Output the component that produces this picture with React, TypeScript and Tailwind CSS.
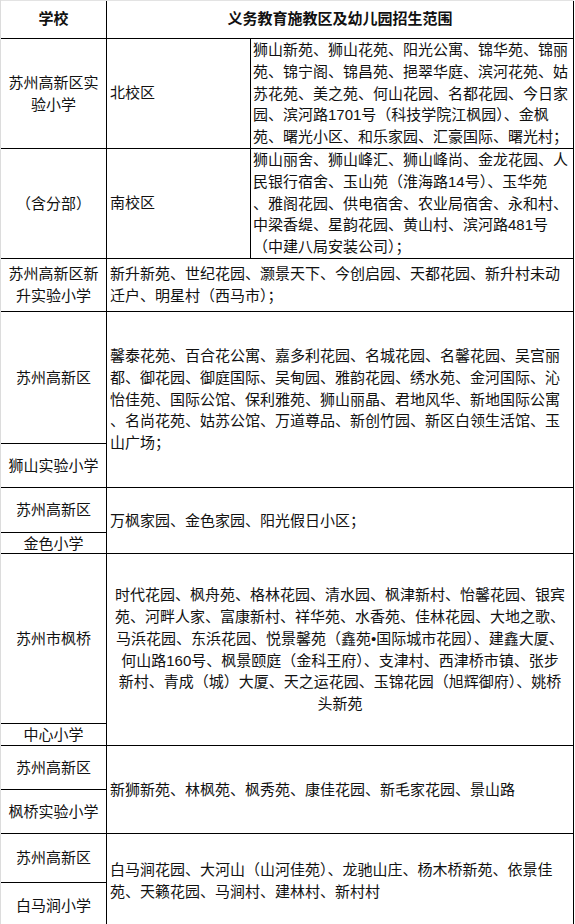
import React from 'react';

type LinesProps = { lines: string[]; center?: boolean };

function Lines({ lines, center }: LinesProps) {
  return (
    <div className={center ? 'flex flex-col items-center' : 'flex flex-col'}>
      {lines.map((l, i) => (
        <div key={i} className="whitespace-nowrap leading-[21.7px]">
          {l}
        </div>
      ))}
    </div>
  );
}

// left column cell, optionally split in two stacked parts
function School({ top, bottom, topH }: { top: string[]; bottom?: string; topH?: string }) {
  if (!bottom) {
    return (
      <div className="w-[106px] shrink-0 border-r border-black flex items-center justify-center text-center">
        <Lines lines={top} center />
      </div>
    );
  }
  return (
    <div className="w-[106px] shrink-0 border-r border-black flex flex-col">
      <div className={`${topH} shrink-0 border-b border-black flex items-center justify-center`}>
        <Lines lines={top} center />
      </div>
      <div className="flex-1 flex items-center justify-center">
        <Lines lines={[bottom]} center />
      </div>
    </div>
  );
}

function Area({ lines, center }: LinesProps) {
  return (
    <div className={`w-[467px] shrink-0 border-r border-black flex items-center ${center ? 'justify-center' : 'pl-[3px]'}`}>
      <Lines lines={lines} center={center} />
    </div>
  );
}

function Campus({ name, lines }: { name: string; lines: string[] }) {
  return (
    <>
      <div className="w-[144px] shrink-0 border-r border-black flex items-center pl-[3px]">{name}</div>
      <div className="w-[323px] shrink-0 border-r border-black flex items-center pl-[2px]">
        <Lines lines={lines} />
      </div>
    </>
  );
}

export default function App() {
  return (
    <div className="w-[575px] min-h-[924px] bg-white text-[15px] text-[#111] [font-family:'Liberation_Sans','Noto_Sans_CJK_SC',sans-serif]">
      <div className="w-[574px] border-l border-[#dcdcdc]">
        {/* header */}
        <div className="flex h-[39px] border-t border-t-[#e3e3e3] border-b border-b-black font-bold">
          <div className="w-[106px] shrink-0 border-r border-black flex items-center justify-center">学校</div>
          <div className="w-[467px] shrink-0 border-r border-black flex items-center justify-center">
            义务教育施教区及幼儿园招生范围
          </div>
        </div>

        {/* 实验小学 北校区 */}
        <div className="flex h-[110px] border-b border-black">
          <School top={['苏州高新区实', '验小学']} />
          <Campus
            name="北校区"
            lines={[
              '狮山新苑、狮山花苑、阳光公寓、锦华苑、锦丽',
              '苑、锦宁阁、锦昌苑、挹翠华庭、滨河花苑、姑',
              '苏花苑、美之苑、何山花园、名都花园、今日家',
              '园、滨河路1701号（科技学院江枫园）、金枫',
              '苑、曙光小区、和乐家园、汇豪国际、曙光村；',
            ]}
          />
        </div>

        {/* 实验小学 南校区 */}
        <div className="flex h-[110px] border-b border-black">
          <School top={['（含分部）']} />
          <Campus
            name="南校区"
            lines={[
              '狮山丽舍、狮山峰汇、狮山峰尚、金龙花园、人',
              '民银行宿舍、玉山苑（淮海路14号）、玉华苑',
              '、雅阁花园、供电宿舍、农业局宿舍、永和村、',
              '中梁香缇、星韵花园、黄山村、滨河路481号',
              '（中建八局安装公司）；',
            ]}
          />
        </div>

        {/* 新升 */}
        <div className="flex h-[53px] border-b border-black">
          <School top={['苏州高新区新', '升实验小学']} />
          <Area
            lines={['新升新苑、世纪花园、灏景天下、今创启园、天都花园、新升村未动', '迁户、明星村（西马市）；']}
          />
        </div>

        {/* 狮山 */}
        <div className="flex h-[176px] border-b border-black">
          <School top={['苏州高新区']} bottom="狮山实验小学" topH="h-[132px]" />
          <Area
            lines={[
              '馨泰花苑、百合花公寓、嘉多利花园、名城花园、名馨花园、吴宫丽',
              '都、御花园、御庭国际、吴甸园、雅韵花园、绣水苑、金河国际、沁',
              '怡佳苑、国际公馆、保利雅苑、狮山丽晶、君地风华、新地国际公寓',
              '、名尚花苑、姑苏公馆、万道尊品、新创竹园、新区白领生活馆、玉',
              '山广场；',
            ]}
          />
        </div>

        {/* 金色 */}
        <div className="flex h-[66px] border-b border-black">
          <School top={['苏州高新区']} bottom="金色小学" topH="h-[45px]" />
          <Area lines={['万枫家园、金色家园、阳光假日小区；']} />
        </div>

        {/* 枫桥中心 */}
        <div className="flex h-[192px] border-b border-black">
          <School top={['苏州市枫桥']} bottom="中心小学" topH="h-[170px]" />
          <Area
            center
            lines={[
              '时代花园、枫舟苑、格林花园、清水园、枫津新村、怡馨花园、银宾',
              '苑、河畔人家、富康新村、祥华苑、水香苑、佳林花园、大地之歌、',
              '马浜花园、东浜花园、悦景馨苑（鑫苑•国际城市花园）、建鑫大厦、',
              '何山路160号、枫景颐庭（金科王府）、支津村、西津桥市镇、张步',
              '新村、青成（城）大厦、天之运花园、玉锦花园（旭辉御府）、姚桥',
              '头新苑',
            ]}
          />
        </div>

        {/* 枫桥实验 */}
        <div className="flex h-[88px] border-b border-black">
          <School top={['苏州高新区']} bottom="枫桥实验小学" topH="h-[44px]" />
          <Area lines={['新狮新苑、林枫苑、枫秀苑、康佳花园、新毛家花园、景山路']} />
        </div>

        {/* 白马涧 */}
        <div className="flex h-[95px] border-b border-black">
          <School top={['苏州高新区']} bottom="白马涧小学" topH="h-[49px]" />
          <Area
            lines={['白马涧花园、大河山（山河佳苑）、龙驰山庄、杨木桥新苑、依景佳', '苑、天籁花园、马涧村、建林村、新村村']}
          />
        </div>
      </div>
    </div>
  );
}
